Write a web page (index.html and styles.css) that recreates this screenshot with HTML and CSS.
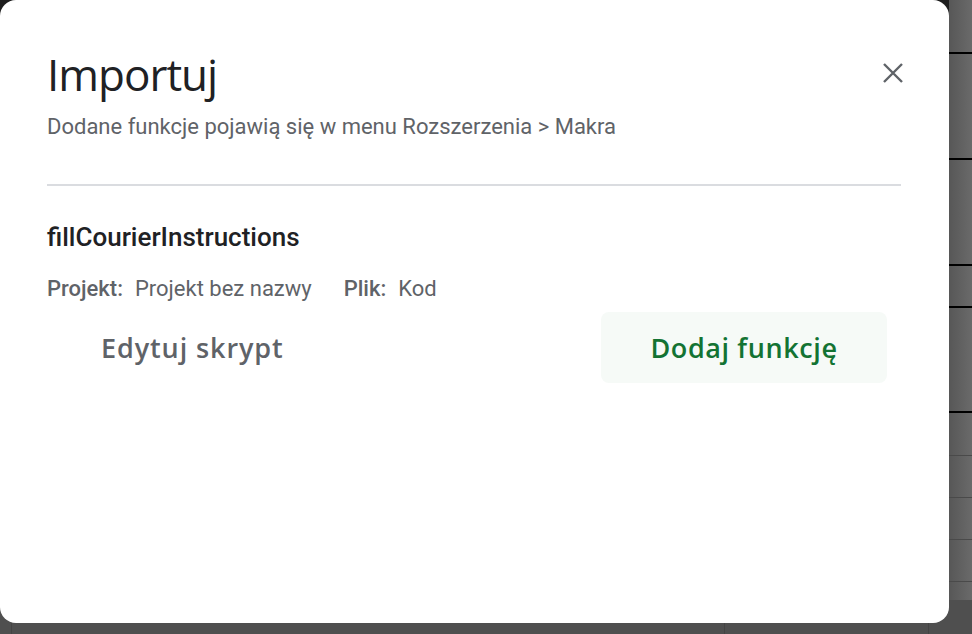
FILE: index.html
```html
<!DOCTYPE html>
<html lang="pl">
<head>
<meta charset="utf-8">
<title>Importuj</title>
<link rel="stylesheet" href="styles.css">
</head>
<body>
<div class="sheet">
  <div class="strip">
    <div class="row r1"></div>
    <div class="row r2"></div>
    <div class="row r3"></div>
    <div class="row r4"></div>
    <div class="row r5"></div>
    <div class="row r6"></div>
    <div class="row r7"></div>
    <div class="row r8"></div>
    <div class="row r9"></div>
  </div>
  <div class="bottom">
    <div class="col c1"></div>
    <div class="col c2"></div>
    <div class="col c3"></div>
  </div>
  <div class="dialog">
    <header class="head">
      <div class="titles">
        <h1 class="title">Importuj</h1>
        <p class="subtitle">Dodane funkcje pojawią się w menu Rozszerzenia &gt; Makra</p>
      </div>
      <button class="close" aria-label="Zamknij">
        <svg width="24" height="24" viewBox="0 0 24 24"><path d="M3 3L21 21M21 3L3 21" stroke="#5f6368" stroke-width="2.4" fill="none"/></svg>
      </button>
    </header>
    <hr class="divider">
    <section class="item">
      <div class="fname">fillCourierInstructions</div>
      <div class="meta">
        <span class="label">Projekt:</span><span class="value">Projekt bez nazwy</span>
        <span class="label gap">Plik:</span><span class="value">Kod</span>
      </div>
      <div class="actions">
        <button class="btn edit">Edytuj skrypt</button>
        <button class="btn add">Dodaj funkcję</button>
      </div>
    </section>
  </div>
</div>
</body>
</html>
```

FILE: styles.css
```css
* { box-sizing: border-box; }
html, body { margin: 0; padding: 0; }
body {
  width: 972px;
  height: 634px;
  overflow: hidden;
  background: #4f4f4f;
  font-family: Roboto, "Liberation Sans", sans-serif;
}
.sheet {
  position: relative;
  width: 972px;
  height: 634px;
  background: #1e1e1e;
}
.strip {
  position: absolute;
  left: 949px;
  top: 0;
  width: 23px;
  height: 634px;
  background: linear-gradient(to right, #575757, #6a6a6a);
}
.row { position: absolute; left: 0; right: 0; height: 2px; background: #000; }
.r1 { top: 52px; }
.r2 { top: 158px; }
.r3 { top: 264px; }
.r4 { top: 306px; }
.r5 { top: 411px; }
.r6 { top: 455px; height: 1px; background: #4a4a4a; }
.r7 { top: 497px; height: 1px; background: #4a4a4a; }
.r8 { top: 539px; height: 1px; background: #4a4a4a; }
.r9 { top: 581px; height: 1px; background: #4a4a4a; }
.bottom {
  position: absolute;
  left: 0;
  top: 600px;
  width: 972px;
  height: 34px;
  background: #4f4f4f;
}
.col { position: absolute; top: 0; bottom: 0; width: 1px; background: #444; }
.c1 { left: 11px; }
.c2 { left: 724px; }
.c3 { left: 928px; }
.dialog {
  position: absolute;
  left: 0;
  top: 0;
  width: 949px;
  height: 623px;
  background: #fff;
  border-radius: 16px;
  padding: 46px 47px 0 47px;
}
.head {
  display: flex;
  justify-content: space-between;
  align-items: flex-start;
}
.title {
  margin: 0;
  font-family: "Open Sans", sans-serif;
  font-weight: 400;
  font-size: 44px;
  line-height: 56px;
  color: #202124;
  letter-spacing: -1px;
}
.subtitle {
  margin: 12px 0 0 0;
  font-size: 22px;
  line-height: 26px;
  color: #5f6368;
}
.close {
  border: 0;
  background: none;
  padding: 0;
  margin: 15px -3px 0 0;
  width: 24px;
  height: 24px;
  display: flex;
}
.divider {
  border: 0;
  height: 2px;
  background: #dadce0;
  margin: 44px 0 0 0;
  width: 854px;
}
.item { padding-top: 36px; }
.fname {
  font-size: 26px;
  font-weight: 500;
  color: #202124;
  line-height: 30px;
}
.meta {
  margin-top: 24px;
  font-size: 22px;
  line-height: 26px;
  color: #5f6368;
  display: flex;
}
.label { font-weight: 500; margin-right: 12px; }
.label.gap { margin-left: 32px; }
.actions {
  margin-top: 10px;
  display: flex;
  justify-content: space-between;
  align-items: center;
  padding-right: 15px;
}
.btn {
  border: 0;
  font-family: "Open Sans", sans-serif;
  font-weight: 600;
  font-size: 27px;
  height: 71px;
  border-radius: 8px;
  cursor: pointer;
}
.edit {
  background: none;
  color: #5f6368;
  padding: 0 54px;
  letter-spacing: 0.9px;
}
.add {
  background: #f6faf7;
  color: #137333;
  width: 286px;
  padding: 0;
  letter-spacing: 0.6px;
}
```
